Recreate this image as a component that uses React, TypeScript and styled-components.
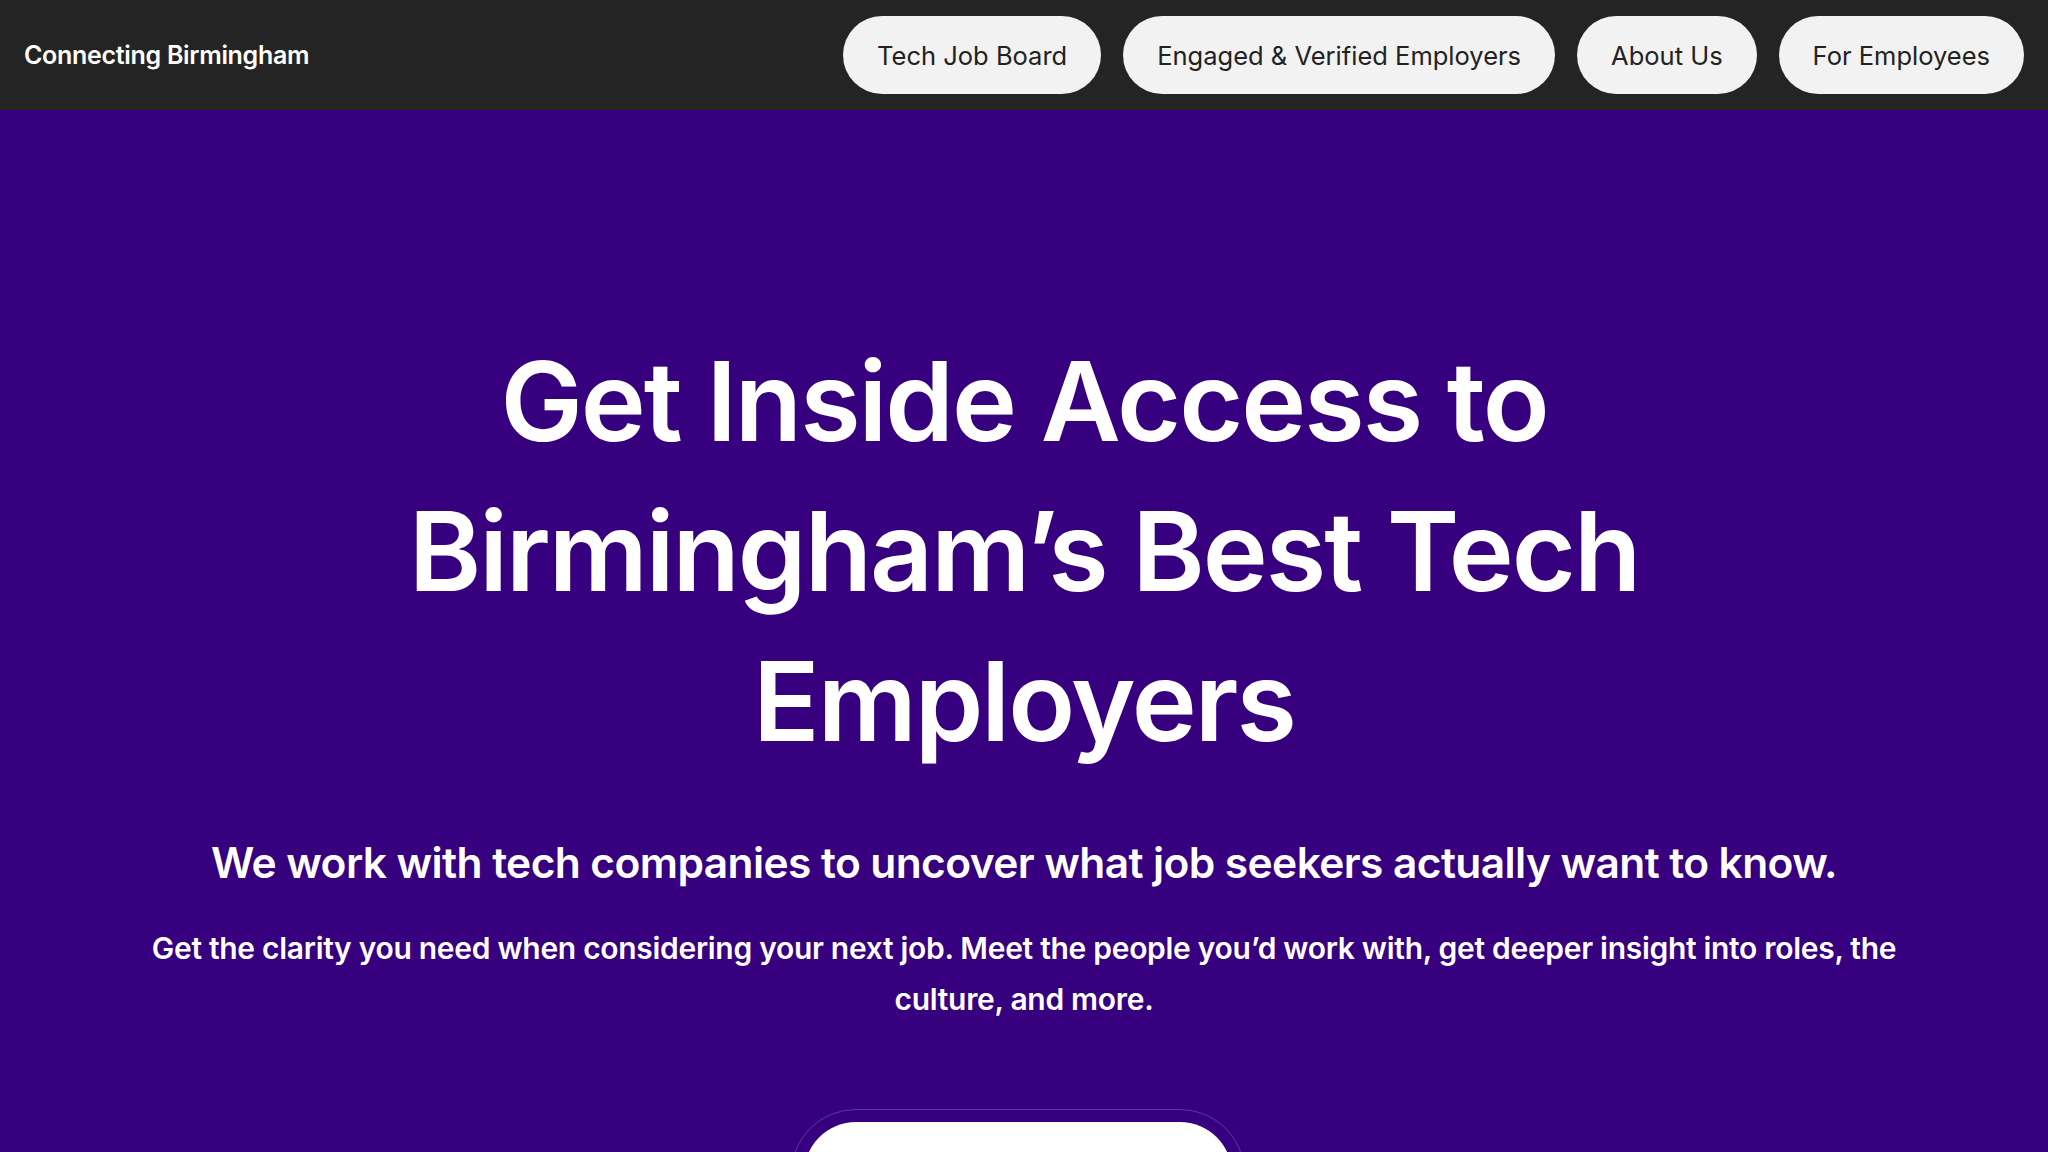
import React from "react";
import styled, { createGlobalStyle } from "styled-components";

const GlobalStyle = createGlobalStyle`
  * { box-sizing: border-box; }
  html, body {
    margin: 0;
    padding: 0;
    background: #36007e;
    font-family: Inter, "Noto Sans", "Liberation Sans", sans-serif;
    -webkit-font-smoothing: antialiased;
  }
`;

const NavBar = styled.header`
  height: 110px;
  background: #242424;
  display: flex;
  align-items: center;
  justify-content: space-between;
  padding: 0 24px;
`;

const Brand = styled.a`
  color: #ffffff;
  font-size: 25px;
  font-weight: 600;
  letter-spacing: -0.3px;
  text-decoration: none;
`;

const NavLinks = styled.nav`
  display: flex;
  align-items: center;
  gap: 22px;
`;

const NavPill = styled.a`
  display: inline-flex;
  align-items: center;
  height: 78px;
  padding: 0 34px;
  border-radius: 999px;
  background: #f2f2f2;
  color: #222222;
  font-size: 25.5px;
  font-weight: 400;
  text-decoration: none;
`;

const Hero = styled.section`
  background: #36007e;
  min-height: 1042px;
  padding: 216px 40px 0;
  display: flex;
  flex-direction: column;
  align-items: center;
  text-align: center;
  color: #ffffff;
`;

const Headline = styled.h1`
  margin: 0;
  max-width: 1320px;
  font-size: 110px;
  line-height: 150px;
  font-weight: 600;
  letter-spacing: -2px;
`;

const Lead = styled.h2`
  margin: 59px 0 0;
  font-size: 42.5px;
  line-height: 56px;
  font-weight: 600;
  letter-spacing: -0.6px;
`;

const Body = styled.p`
  margin: 32px 0 0;
  max-width: 1790px;
  font-size: 30px;
  line-height: 51px;
  font-weight: 600;
  letter-spacing: -0.3px;
`;

const CtaRing = styled.div`
  margin-top: 84px;
  margin-right: 12px;
  padding: 12px;
  border-radius: 999px;
  border: 1.5px solid rgba(255, 255, 255, 0.22);
`;

const CtaButton = styled.a`
  display: flex;
  align-items: center;
  justify-content: center;
  width: 428px;
  height: 104px;
  border-radius: 999px;
  background: #ffffff;
  color: #36007e;
  font-size: 28px;
  font-weight: 600;
  text-decoration: none;
`;

const links = [
  "Tech Job Board",
  "Engaged & Verified Employers",
  "About Us",
  "For Employees",
];

export default function App() {
  return (
    <>
      <GlobalStyle />
      <NavBar>
        <Brand href="#">Connecting Birmingham</Brand>
        <NavLinks>
          {links.map((l) => (
            <NavPill key={l} href="#">
              {l}
            </NavPill>
          ))}
        </NavLinks>
      </NavBar>
      <Hero>
        <Headline>Get Inside Access to Birmingham’s Best Tech Employers</Headline>
        <Lead>We work with tech companies to uncover what job seekers actually want to know.</Lead>
        <Body>
          Get the clarity you need when considering your next job. Meet the people you’d work
          with, get deeper insight into roles, the culture, and more.
        </Body>
        <CtaRing>
          <CtaButton href="#">Explore Employers</CtaButton>
        </CtaRing>
      </Hero>
    </>
  );
}
